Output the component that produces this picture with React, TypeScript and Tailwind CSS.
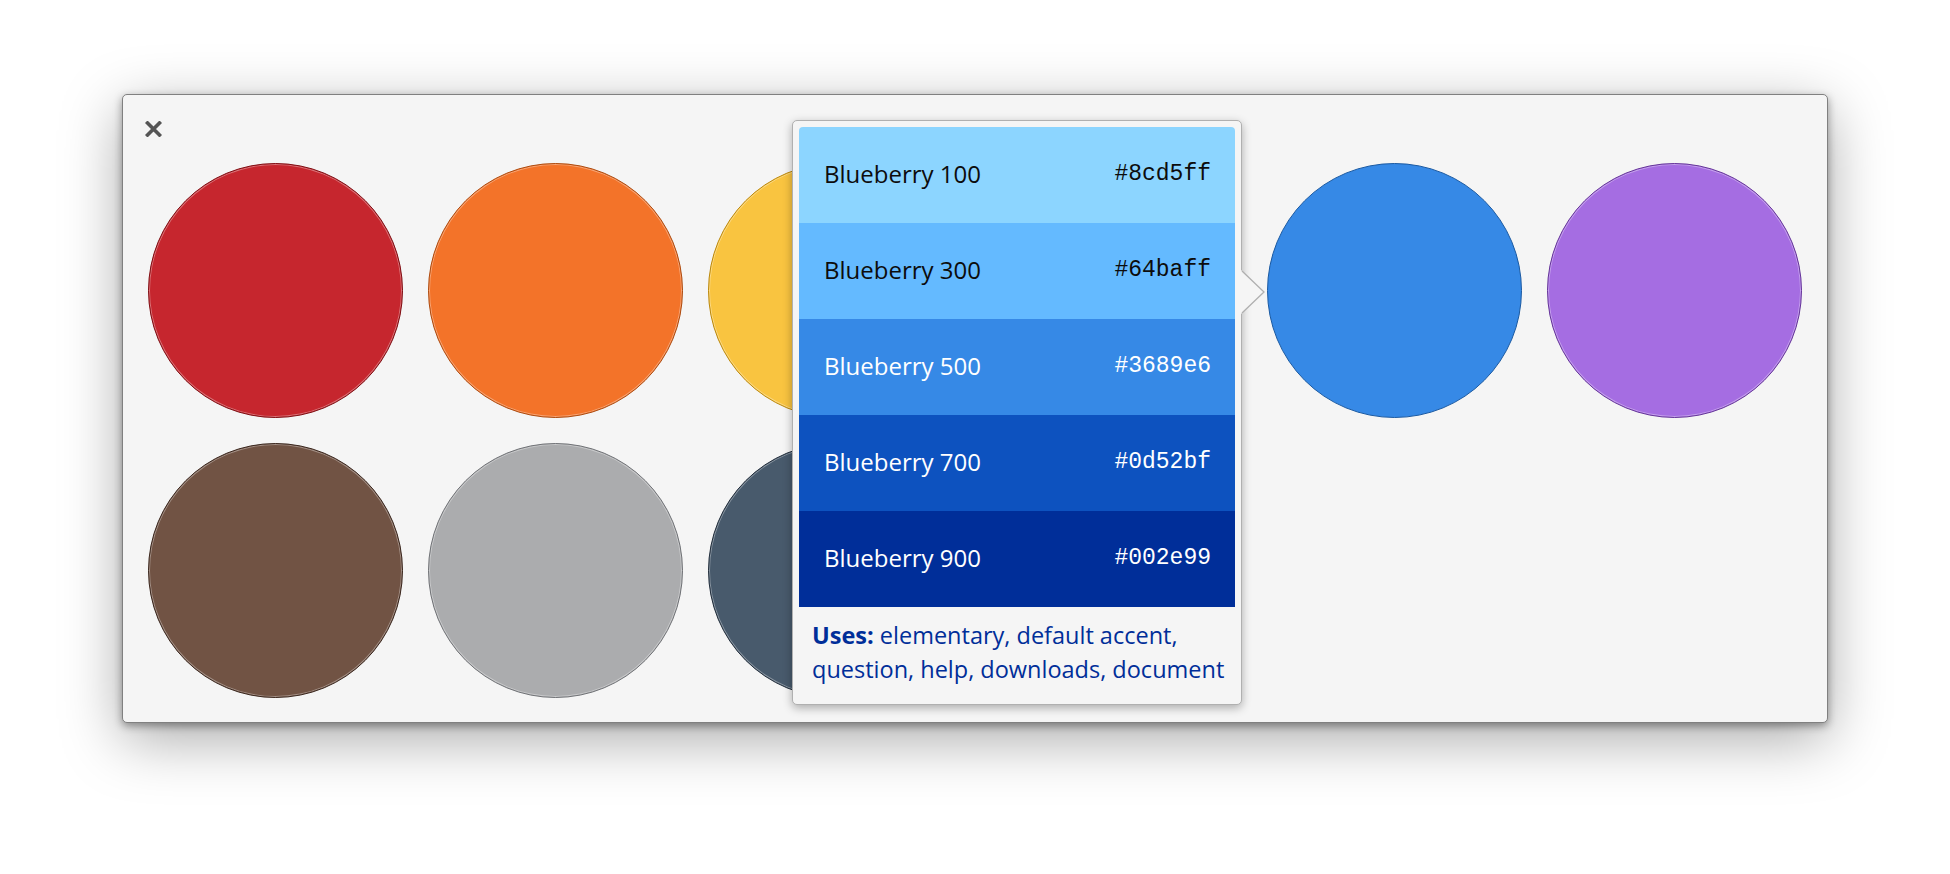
import React from "react";

type Swatch = { fill: string; border: string; active?: boolean };

const swatches: Swatch[] = [
  { fill: "#c6262e", border: "#7f0d12" },
  { fill: "#f37329", border: "#ad4a0e" },
  { fill: "#f9c440", border: "#bb880c" },
  { fill: "#68b723", border: "#3a9104" },
  { fill: "#3689e6", border: "#1b5aa2", active: true },
  { fill: "#a56de2", border: "#653499" },
  { fill: "#715344", border: "#3a261d" },
  { fill: "#abacae", border: "#707276" },
  { fill: "#485a6c", border: "#212d3b" },
  { fill: "#333333", border: "#1a1a1a" },
];

const shades = [
  { name: "Blueberry 100", hex: "#8cd5ff", bg: "bg-[#8cd5ff]", text: "text-[#0c0c0c]" },
  { name: "Blueberry 300", hex: "#64baff", bg: "bg-[#64baff]", text: "text-[#0c0c0c]" },
  { name: "Blueberry 500", hex: "#3689e6", bg: "bg-[#3689e6]", text: "text-white" },
  { name: "Blueberry 700", hex: "#0d52bf", bg: "bg-[#0d52bf]", text: "text-white" },
  { name: "Blueberry 900", hex: "#002e99", bg: "bg-[#002e99]", text: "text-white" },
];

function Circle({ s }: { s: Swatch }) {
  return (
    <div
      className={
        "w-[255px] h-[255px] rounded-full border-[1.5px] " +
        (s.active ? "" : "shadow-[inset_0_0_0_1px_rgba(255,255,255,0.35)]")
      }
      style={{ backgroundColor: s.fill, borderColor: s.border }}
    />
  );
}

export default function App() {
  return (
    <div className="min-h-[874px] w-full bg-white flex justify-center pt-[94px] font-['Open_Sans',sans-serif]">
      <div className="relative w-[1706px] h-[629px] bg-[#f5f5f5] border border-[#808080] rounded-[5px] shadow-[0_3px_8px_rgba(0,0,0,0.38),0_16px_60px_rgba(0,0,0,0.34)] pl-[25px] pr-[24px] pt-[26px]">
        <div className="h-[16px] ml-[-3px]">
          <svg width="17" height="16" viewBox="0 0 17 16">
            <path d="M2.5 2 L14.5 14 M14.5 2 L2.5 14" stroke="#555555" strokeWidth="3.6" strokeLinecap="square" />
          </svg>
        </div>
        <div className="mt-[26px] grid grid-cols-[repeat(6,255px)] gap-x-[24.8px] gap-y-[25px]">
          {swatches.map((s, i) => (
            <Circle key={i} s={s} />
          ))}
        </div>

        <div className="absolute left-[669px] top-[25px] w-[450px] h-[585px] bg-[#f5f5f5] border border-[#b0b0b0] rounded-[5px] shadow-[0_3px_10px_rgba(0,0,0,0.3)] p-[6px]">
          <div className="rounded-t-[4px] overflow-hidden">
            {shades.map((r) => (
              <div key={r.name} className={"h-[96px] flex items-center justify-between pl-[25px] pr-[24px] " + r.bg + " " + r.text}>
                <span className="text-[24px] leading-none -mt-[2px]">{r.name}</span>
                <span className="font-['Liberation_Mono',monospace] text-[23px] leading-none -mt-[1px]">{r.hex}</span>
              </div>
            ))}
          </div>
          <div className="pt-[11px] px-[13px] text-[23.5px] leading-[34px] text-[#002e99] whitespace-nowrap">
            <span className="font-bold">Uses:</span> elementary, default accent,
            <br />
            question, help, downloads, document
          </div>
          <svg
            className="absolute right-[-24px] top-[149px]"
            width="24"
            height="44"
            viewBox="0 0 24 44"
          >
            <polygon points="0,0 23,22 0,44" fill="#f5f5f5" />
            <polyline points="1,1 23,22 1,43" fill="none" stroke="#b0b0b0" strokeWidth="1.3" />
          </svg>
        </div>
      </div>
    </div>
  );
}
